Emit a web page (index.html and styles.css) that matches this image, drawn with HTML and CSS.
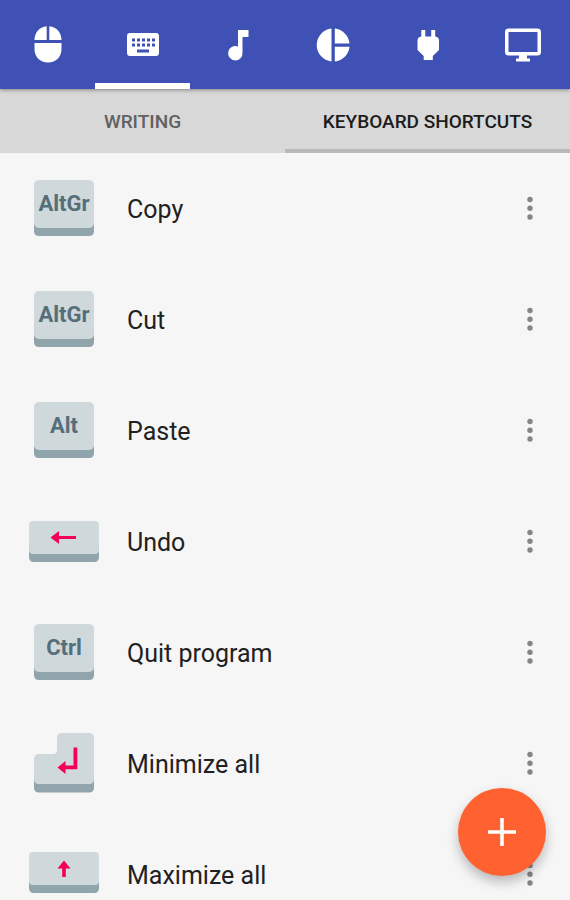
FILE: index.html
```html
<!DOCTYPE html>
<html lang="en">
<head>
<meta charset="utf-8">
<meta name="viewport" content="width=device-width, initial-scale=1">
<title>Keyboard shortcuts</title>
<link rel="stylesheet" href="styles.css">
</head>
<body>
<svg class="defs" aria-hidden="true">
  <symbol id="dots" viewBox="0 0 24 32"><circle cx="12" cy="6.500" r="2.700"/><circle cx="12" cy="15.200" r="2.700"/><circle cx="12" cy="24" r="2.700"/></symbol>
  <symbol id="square-key" viewBox="0 0 70 61"><path fill="#90a4ab" d="M5 46H65V53Q65 58 60 58H10Q5 58 5 53Z"/><rect fill="#cfd8da" x="5" y="2" width="60" height="48" rx="5"/></symbol>
  <symbol id="wide-key" viewBox="0 0 70 61"><path fill="#90a4ab" d="M0 39H70V46Q70 51 65 51H5Q0 51 0 46Z"/><rect fill="#cfd8da" y="10" width="70" height="33" rx="4"/></symbol>
</svg>
<nav class="toolbar" aria-label="Remotes">
  <button class="tool" aria-label="Mouse"><svg viewBox="0 0 40 40"><path d="M18.700 1.200V15H6.500C6.500 8 11 2 18.700 1.200ZM21.300 1.200V15H33.500C33.500 8 29 2 21.300 1.200ZM6.500 18H33.500V24C33.500 32 28 37.500 20 37.500S6.500 32 6.500 24Z"/></svg></button>
  <button class="tool active" aria-label="Keyboard"><svg viewBox="0 0 40 40"><path fill-rule="evenodd" d="M7 8H33Q36 8 36 11V28Q36 31 33 31H7Q4 31 4 28V11Q4 8 7 8ZM9 13.500v3h3v-3ZM14 13.500v3h3v-3ZM19 13.500v3h3v-3ZM24 13.500v3h3v-3ZM29 13.500v3h3v-3ZM9 18.500v3h3v-3ZM14 18.500v3h3v-3ZM19 18.500v3h3v-3ZM24 18.500v3h3v-3ZM29 18.500v3h3v-3ZM14 24.500v3h12v-3Z"/></svg></button>
  <button class="tool" aria-label="Music"><svg viewBox="0 0 40 40"><path d="M20 5H30.500V12H24.500V27.500A7.200 7.200 0 1 1 20 21.500Z"/></svg></button>
  <button class="tool" aria-label="Statistics"><svg viewBox="0 0 40 40"><path d="M18.500 3.500V36.500A16.600 16.600 0 0 1 18.500 3.500ZM21.800 3.500A16.600 16.600 0 0 1 36.500 18.500H21.800ZM21.800 21.700H36.500A16.600 16.600 0 0 1 21.800 36.500Z"/></svg></button>
  <button class="tool" aria-label="Power"><svg viewBox="0 0 40 40"><path d="M13.300 5H17.300V11.500H23.200V5H27.200V11.500Q31 12 31 15.500V25L24.800 31V35H15.700V31L9.500 25V15.500Q9.500 12 13.300 11.500Z"/></svg></button>
  <button class="tool" aria-label="Screen"><svg viewBox="0 0 40 40"><path fill-rule="evenodd" d="M5.500 3.500H34.500Q38 3.500 38 7V27Q38 30.500 34.500 30.500H24V33.500H27V36.500H13V33.500H16V30.500H5.500Q2 30.500 2 27V7Q2 3.500 5.500 3.500ZM5.500 7V27H34.500V7Z"/></svg></button>
</nav>
<nav class="tabs" aria-label="Keyboard modes">
  <button class="tab">WRITING</button>
  <button class="tab active">KEYBOARD SHORTCUTS</button>
</nav>
<main class="content">
  <ul class="shortcuts">
    <li class="shortcut"><svg class="key" viewBox="0 0 70 61"><use href="#square-key"/><text x="35" y="33">AltGr</text></svg><span class="name">Copy</span><button class="more" aria-label="Copy options"><svg><use href="#dots"/></svg></button></li>
    <li class="shortcut"><svg class="key" viewBox="0 0 70 61"><use href="#square-key"/><text x="35" y="33">AltGr</text></svg><span class="name">Cut</span><button class="more" aria-label="Cut options"><svg><use href="#dots"/></svg></button></li>
    <li class="shortcut"><svg class="key" viewBox="0 0 70 61"><use href="#square-key"/><text x="35" y="33">Alt</text></svg><span class="name">Paste</span><button class="more" aria-label="Paste options"><svg><use href="#dots"/></svg></button></li>
    <li class="shortcut"><svg class="key" viewBox="0 0 70 61"><use href="#wide-key"/><path class="arrow" d="M21.500 26.500L30 20V25H47V28H30V33Z"/></svg><span class="name">Undo</span><button class="more" aria-label="Undo options"><svg><use href="#dots"/></svg></button></li>
    <li class="shortcut"><svg class="key" viewBox="0 0 70 61"><use href="#square-key"/><text x="35" y="33">Ctrl</text></svg><span class="name">Quit program</span><button class="more" aria-label="Quit program options"><svg><use href="#dots"/></svg></button></li>
    <li class="shortcut"><svg class="key" viewBox="0 0 70 61"><path fill="#90a4ab" d="M5 47H65V54.500Q65 59.500 60 59.500H10Q5 59.500 5 54.500Z"/><path fill="#cfd8da" d="M33 0H60Q65 0 65 5V46Q65 51 60 51H10Q5 51 5 46V26Q5 21 10 21H24Q28 21 28 17V5Q28 0 33 0Z"/><path class="arrow" d="M28.500 34.500L36.500 28V32.500H44.500V14.500H48.300V36.300H36.500V41Z"/></svg><span class="name">Minimize all</span><button class="more" aria-label="Minimize all options"><svg><use href="#dots"/></svg></button></li>
    <li class="shortcut"><svg class="key" viewBox="0 2 70 61"><use href="#wide-key" width="70" height="61"/><path class="arrow" d="M35 18.500L41.500 26.500H36.800V35H33.200V26.500H28.500Z"/></svg><span class="name">Maximize all</span><button class="more" aria-label="Maximize all options"><svg><use href="#dots"/></svg></button></li>
  </ul>
</main>
<button class="add" aria-label="Add shortcut"><svg viewBox="0 0 28 28"><path d="M12.200 0H15.800V12.200H28V15.800H15.800V28H12.200V15.800H0V12.200H12.200Z"/></svg></button>
</body>
</html>
```
FILE: styles.css
```css
* {
  box-sizing: border-box;
}

body {
  display: flex;
  flex-direction: column;
  height: 100vh;
  margin: 0;
  background: #f6f6f6;
  color: #212121;
  font-family: Roboto, "Liberation Sans", sans-serif;
}

button {
  margin: 0;
  padding: 0;
  border: 0;
  background: none;
  font: inherit;
  cursor: pointer;
}

.defs {
  position: absolute;
  width: 0;
  height: 0;
}

.toolbar {
  z-index: 1;
  display: flex;
  flex: none;
  height: 89px;
  background: #3f51b5;
  box-shadow: 0 1px 4px rgba(0, 0, 0, 0.4);
}

.tool {
  display: flex;
  flex: 1;
  align-items: center;
  justify-content: center;
  border-top: 6px solid transparent;
  border-bottom: 6px solid transparent;
}

.tool.active {
  border-bottom-color: #fff;
}

.tool svg {
  width: 40px;
  height: 40px;
  fill: #fff;
}

.tabs {
  display: flex;
  flex: none;
  height: 64px;
  background: #d8d8d8;
}

.tab {
  flex: 1;
  border-top: 4px solid transparent;
  border-bottom: 4px solid transparent;
  color: #616161;
  font-size: 19px;
  font-weight: 500;
}

.tab.active {
  border-bottom-color: #b9b9b9;
  color: #1c1c1c;
}

.content {
  flex: 1;
  min-height: 0;
  overflow-y: auto;
  scrollbar-width: none;
}

.shortcuts {
  margin: 0;
  padding: 0;
  list-style: none;
}

.shortcut {
  display: flex;
  align-items: center;
  gap: 28px;
  height: 111px;
  padding: 0 24px 0 29px;
}

.key {
  flex: none;
  width: 70px;
  height: 61px;
}

.key text {
  fill: #546e7a;
  font-size: 22px;
  font-weight: 700;
  text-anchor: middle;
}

.arrow {
  fill: #f50057;
}

.name {
  flex: 1;
  padding-top: 2px;
  font-size: 25px;
}

.more {
  display: flex;
  justify-content: center;
  width: 32px;
}

.more svg {
  width: 24px;
  height: 32px;
  fill: #858585;
}

.add {
  position: fixed;
  right: 24px;
  bottom: 24px;
  z-index: 2;
  display: flex;
  align-items: center;
  justify-content: center;
  width: 88px;
  height: 88px;
  border-radius: 50%;
  background: #ff6230;
  box-shadow: 0 6px 12px rgba(0, 0, 0, 0.25);
}

.add svg {
  width: 28px;
  height: 28px;
  fill: #fff;
}
```
